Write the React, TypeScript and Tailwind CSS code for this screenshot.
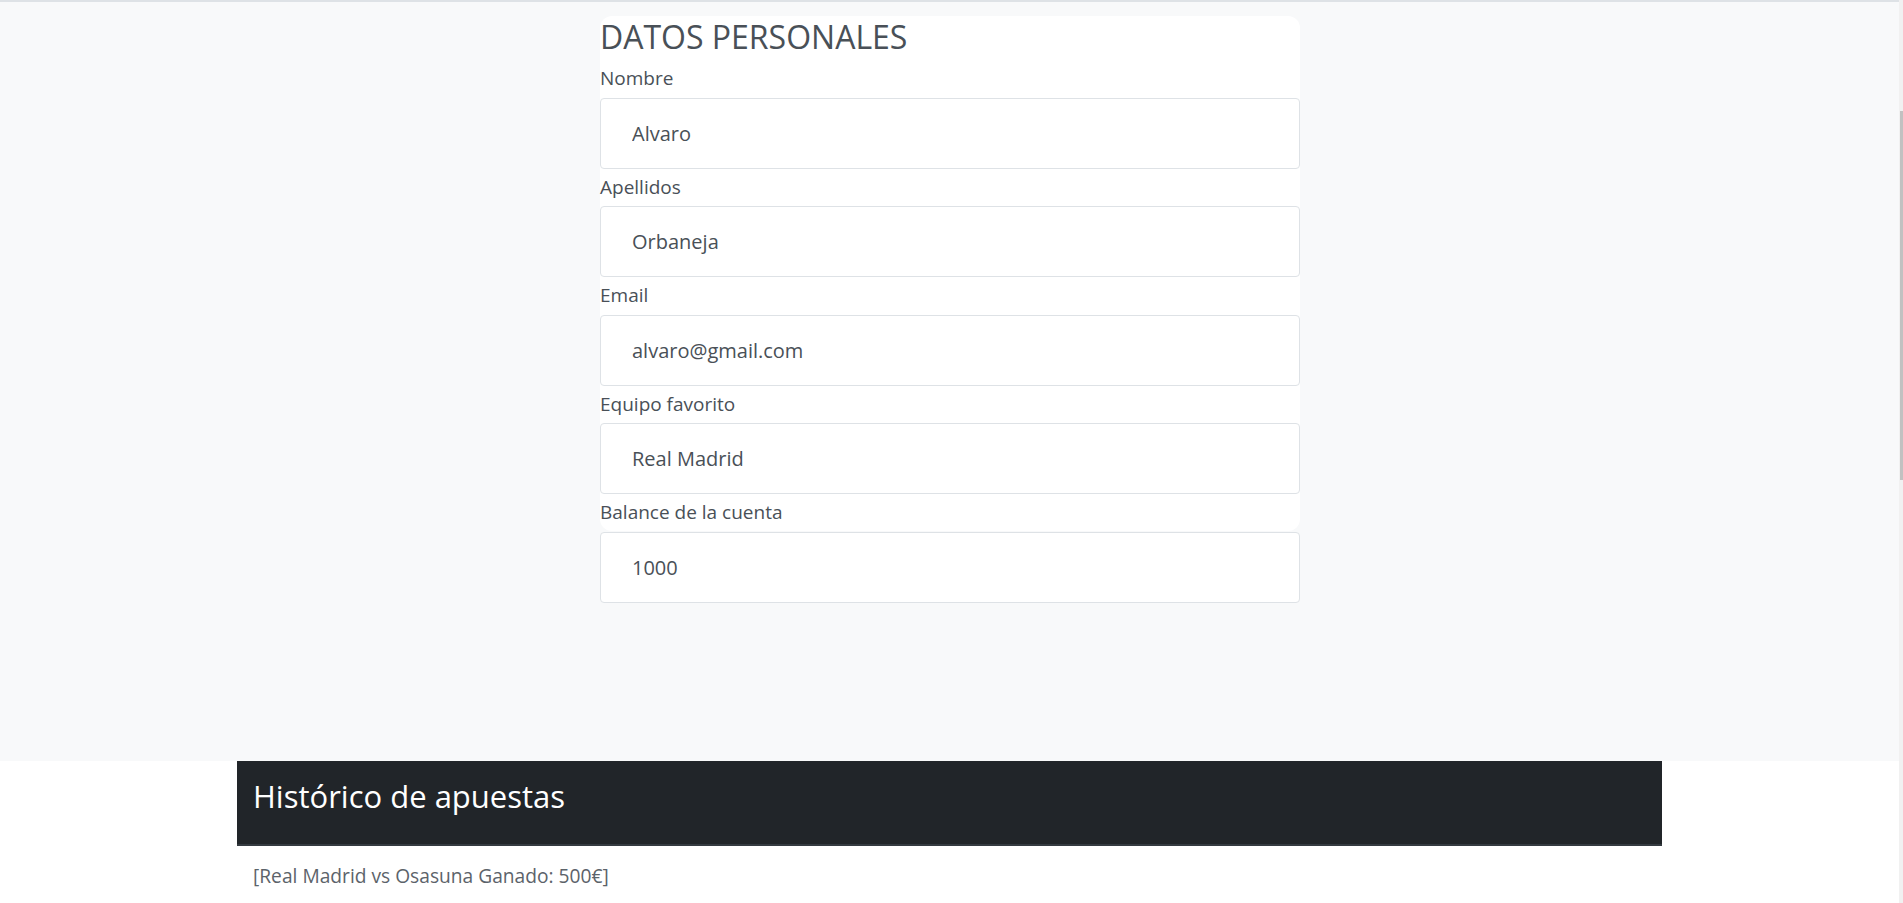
const fields = [
  { label: "Nombre", value: "Alvaro" },
  { label: "Apellidos", value: "Orbaneja" },
  { label: "Email", value: "alvaro@gmail.com" },
  { label: "Equipo favorito", value: "Real Madrid" },
  { label: "Balance de la cuenta", value: "1000" },
];

const apuestas = ["[Real Madrid vs Osasuna Ganado: 500€]"];

function Field({ label, value }: { label: string; value: string }) {
  return (
    <div>
      <label className="block h-[37.5px] text-[19px] leading-[36px] text-[#495057]">{label}</label>
      <input
        readOnly
        value={value}
        className="block h-[71px] w-full rounded-[4px] border border-[#dee2e6] bg-white px-[31px] text-[20px] text-[#495057] outline-none"
      />
    </div>
  );
}

export default function App() {
  return (
    <div className="relative min-h-screen bg-white font-['Open_Sans','Noto_Sans',sans-serif]">
      <section className="h-[761px] border-t-2 border-[#dee2e6] bg-[#f8f9fa] pt-[14px]">
        <div className="ml-[600px] h-[515px] w-[700px] rounded-xl bg-white">
          <h2 className="h-[44px] text-[32px] leading-[41px] text-[#495057]">DATOS PERSONALES</h2>
          {fields.map((f) => (
            <Field key={f.label} label={f.label} value={f.value} />
          ))}
        </div>
      </section>

      <section className="ml-[237px] w-[1425px]">
        <div className="h-[85px] border-b-2 border-[#343a40] bg-[#212529] pl-[16px] pt-[11px]">
          <h3 className="text-[31px] leading-[48px] text-white">Histórico de apuestas</h3>
        </div>
        <div className="pl-[16px] pt-[16px]">
          {apuestas.map((a) => (
            <p key={a} className="text-[19.2px] leading-[28.8px] text-[#5c636a]">
              {a}
            </p>
          ))}
        </div>
      </section>

      {/* fake scrollbar */}
      <div className="absolute right-0 top-0 h-[903px] w-[4px] bg-[#f1f1f1]">
        <div className="ml-[1px] mt-[111px] h-[369px] w-[3px] bg-[#c1c1c1]" />
      </div>
    </div>
  );
}
